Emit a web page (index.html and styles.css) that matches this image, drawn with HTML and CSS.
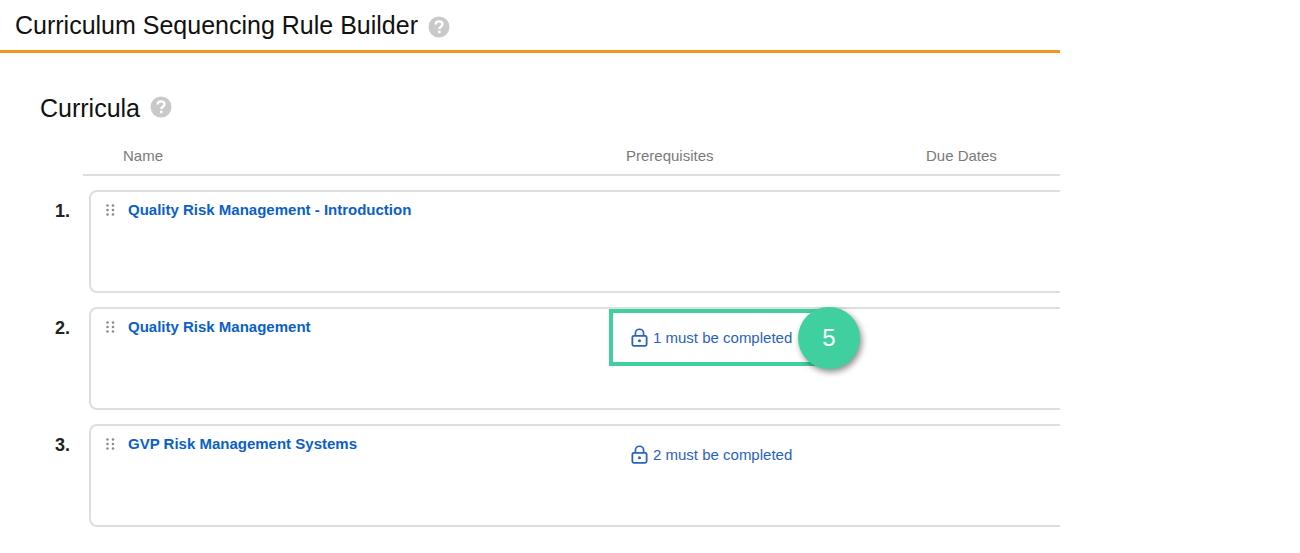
FILE: index.html
```html
<!DOCTYPE html>
<html lang="en">
<head>
<meta charset="utf-8">
<title>Curriculum Sequencing Rule Builder</title>
<link rel="stylesheet" href="styles.css">
</head>
<body>
<main class="page">
  <header class="page-head">
    <h1 class="page-title">Curriculum Sequencing Rule Builder</h1>
    <svg class="help help-lg" viewBox="0 0 22 22" aria-hidden="true"><circle cx="11" cy="11" r="10.5" fill="#c9c9c9"/><path d="M7.6 8.6c0-2 1.5-3.2 3.5-3.2s3.4 1.1 3.4 2.9c0 2.4-3.2 2.5-3.2 4.7" fill="none" stroke="#fff" stroke-width="2.4"/><rect x="10" y="14.6" width="2.6" height="2.6" fill="#fff"/></svg>
  </header>
  <section class="section">
    <div class="section-head">
      <h2 class="section-title">Curricula</h2>
      <svg class="help help-lg" viewBox="0 0 22 22" aria-hidden="true"><circle cx="11" cy="11" r="10.5" fill="#c9c9c9"/><path d="M7.6 8.6c0-2 1.5-3.2 3.5-3.2s3.4 1.1 3.4 2.9c0 2.4-3.2 2.5-3.2 4.7" fill="none" stroke="#fff" stroke-width="2.4"/><rect x="10" y="14.6" width="2.6" height="2.6" fill="#fff"/></svg>
    </div>
    <div class="col-head">
      <span class="col-name">Name</span>
      <span class="col-pre">Prerequisites</span>
      <span class="col-due">Due Dates</span>
    </div>
    <ol class="rows">
      <li class="row">
        <span class="num">1.</span>
        <div class="card">
          <svg class="grip" viewBox="0 0 9 12" aria-hidden="true"><g fill="#8c8c8c"><circle cx="1.5" cy="1.5" r="1.3"/><circle cx="7" cy="1.5" r="1.3"/><circle cx="1.5" cy="6" r="1.3"/><circle cx="7" cy="6" r="1.3"/><circle cx="1.5" cy="10.5" r="1.3"/><circle cx="7" cy="10.5" r="1.3"/></g></svg>
          <a class="name">Quality Risk Management - Introduction</a>
        </div>
      </li>
      <li class="row">
        <span class="num">2.</span>
        <div class="card">
          <svg class="grip" viewBox="0 0 9 12" aria-hidden="true"><g fill="#8c8c8c"><circle cx="1.5" cy="1.5" r="1.3"/><circle cx="7" cy="1.5" r="1.3"/><circle cx="1.5" cy="6" r="1.3"/><circle cx="7" cy="6" r="1.3"/><circle cx="1.5" cy="10.5" r="1.3"/><circle cx="7" cy="10.5" r="1.3"/></g></svg>
          <a class="name">Quality Risk Management</a>
          <span class="prereq">
            <svg class="lock" viewBox="0 0 17 20" aria-hidden="true"><path d="M4.2 8.5V5.6a4.3 4.3 0 0 1 8.6 0v2.9" fill="none" stroke="#2a62c0" stroke-width="1.8"/><rect x="1" y="8.2" width="15" height="10.6" rx="1.6" fill="none" stroke="#2a62c0" stroke-width="1.9"/><circle cx="8.5" cy="13.5" r="1.6" fill="#2a62c0"/></svg>
            <span>1 must be completed</span>
          </span>
        </div>
      </li>
      <li class="row">
        <span class="num">3.</span>
        <div class="card">
          <svg class="grip" viewBox="0 0 9 12" aria-hidden="true"><g fill="#8c8c8c"><circle cx="1.5" cy="1.5" r="1.3"/><circle cx="7" cy="1.5" r="1.3"/><circle cx="1.5" cy="6" r="1.3"/><circle cx="7" cy="6" r="1.3"/><circle cx="1.5" cy="10.5" r="1.3"/><circle cx="7" cy="10.5" r="1.3"/></g></svg>
          <a class="name">GVP Risk Management Systems</a>
          <span class="prereq">
            <svg class="lock" viewBox="0 0 17 20" aria-hidden="true"><path d="M4.2 8.5V5.6a4.3 4.3 0 0 1 8.6 0v2.9" fill="none" stroke="#2a62c0" stroke-width="1.8"/><rect x="1" y="8.2" width="15" height="10.6" rx="1.6" fill="none" stroke="#2a62c0" stroke-width="1.9"/><circle cx="8.5" cy="13.5" r="1.6" fill="#2a62c0"/></svg>
            <span>2 must be completed</span>
          </span>
        </div>
      </li>
    </ol>
  </section>
  <div class="callout"></div>
  <div class="badge">5</div>
</main>
</body>
</html>
```

FILE: styles.css
```css
* { box-sizing: border-box; }
html, body { margin: 0; padding: 0; background: #fff; }
body {
  width: 1300px;
  height: 553px;
  overflow: hidden;
  font-family: "Liberation Sans", Arial, sans-serif;
}
.page { position: relative; width: 1300px; height: 553px; }
.page-head {
  width: 1060px;
  height: 53px;
  padding: 10px 0 0 15px;
  display: flex;
  align-items: flex-start;
  gap: 10px;
  border-bottom: 3px solid #f7941d;
}
.page-title {
  margin: 0;
  font-size: 25px;
  line-height: 30px;
  font-weight: 400;
  color: #111;
}
.help-lg { width: 22px; height: 22px; flex: none; margin-top: 6px; }
.section { width: 1060px; overflow: hidden; padding-top: 40px; }
.section-head {
  padding-left: 40px;
  display: flex;
  gap: 10px;
  align-items: flex-start;
  height: 30px;
}
.section-title {
  margin: 0;
  font-size: 25px;
  line-height: 30px;
  font-weight: 400;
  color: #111;
}
.section-head .help-lg { margin-top: 3px; }
.col-head {
  margin: 25px 0 0 83px;
  height: 28px;
  border-bottom: 2px solid #dedede;
  display: flex;
  font-size: 15px;
  line-height: 16px;
  color: #7a7a7a;
}
.col-name { margin-left: 40px; width: 503px; }
.col-pre { width: 300px; }
.rows { list-style: none; margin: 14px 0 0; padding: 0; display: flex; flex-direction: column; gap: 14px; }
.row { display: flex; height: 103px; width: 1100px; }
.num {
  width: 89px;
  padding: 12px 19px 0 0;
  text-align: right;
  font-size: 18px;
  line-height: 18px;
  font-weight: 700;
  color: #222;
}
.card {
  flex: 1;
  position: relative;
  border: 2px solid #dedede;
  border-radius: 8px;
  display: flex;
  align-items: flex-start;
  padding: 12px 0 0 15px;
}
.grip { width: 9px; height: 12px; flex: none; }
.name {
  margin: -3px 0 0 13px;
  width: 501px;
  flex: none;
  font-size: 15px;
  line-height: 17px;
  font-weight: 700;
  color: #0b5fc9;
}
.prereq {
  margin: 7px 0 0 2px;
  display: flex;
  align-items: center;
  gap: 5px;
  font-size: 15px;
  line-height: 17px;
  color: #2a62c0;
}
.lock { width: 17px; height: 19px; flex: none; }
.callout {
  position: absolute;
  left: 609px;
  top: 309px;
  width: 212px;
  height: 57px;
  border: 4px solid #40d0a0;
  pointer-events: none;
}
.badge {
  position: absolute;
  left: 798px;
  top: 307px;
  width: 62px;
  height: 62px;
  border-radius: 50%;
  background: #40d0a0;
  color: #fff;
  font-size: 24px;
  line-height: 62px;
  text-align: center;
  box-shadow: 2px 3px 6px rgba(0, 0, 0, .45);
}
```
